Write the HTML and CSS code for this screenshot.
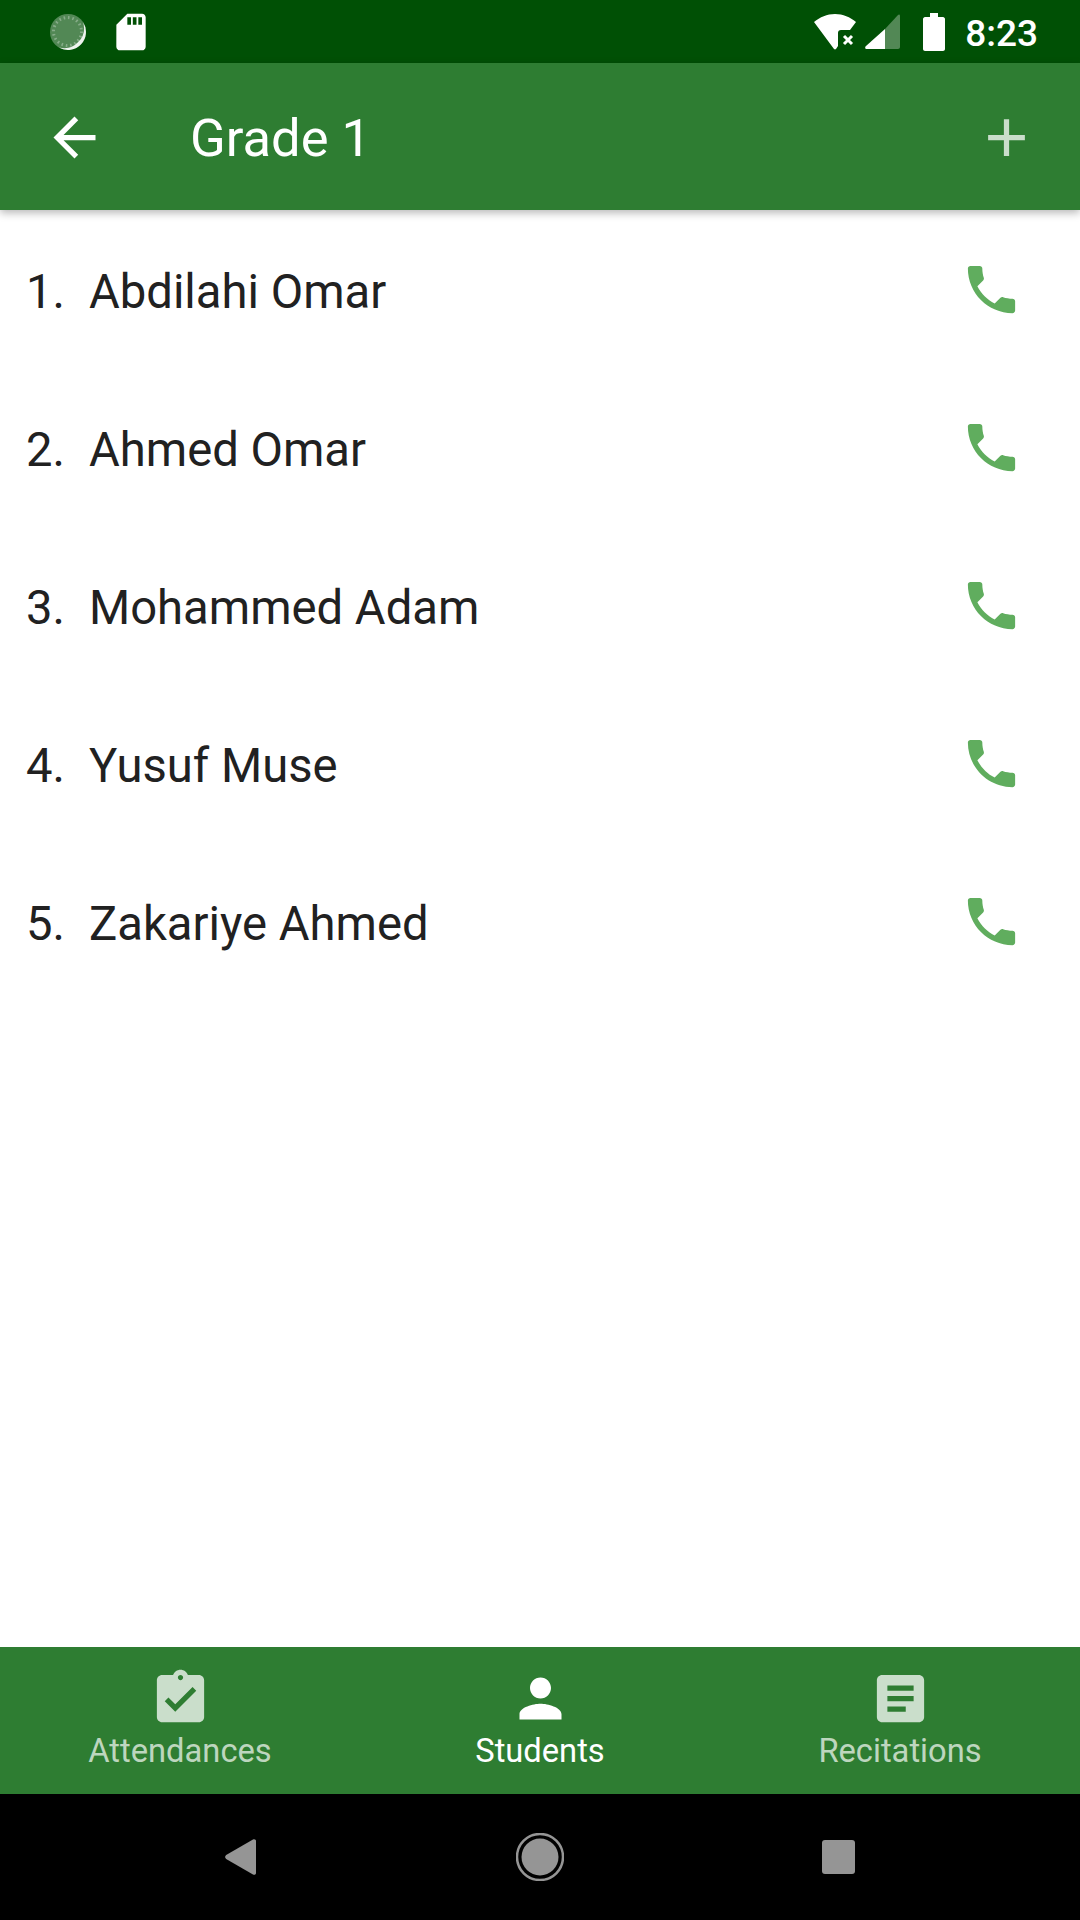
FILE: index.html
```html
<!DOCTYPE html>
<html lang="en">
<head>
  <meta charset="UTF-8">
  <title>Grade 1</title>
  <link rel="stylesheet" href="styles.css">
</head>
<body>
  <div class="status-bar">
    <div class="status-left">
      <svg class="icon-sync" viewBox="0 0 44 44">
        <circle cx="21" cy="22" r="18" fill="#fff" fill-opacity=".32"/>
        <circle cx="20.500" cy="21.500" r="14" fill="none" stroke="#fff" stroke-opacity=".3" stroke-width="3" stroke-dasharray="1.600 2.800"/>
        <path d="M36 12a18 18 0 0 1-24 25.500a20 20 0 0 0 24-25.500z" fill="#fff" fill-opacity=".9"/>
      </svg>
      <svg class="icon-sd" viewBox="0 0 24 24"><path fill="#fff" d="M18 2h-8L4.020 8 4 20c0 1.100.9 2 2 2h12c1.100 0 2-.9 2-2V4c0-1.100-.9-2-2-2zm-6 6h-2V4h2v4zm3 0h-2V4h2v4zm3 0h-2V4h2v4z"/></svg>
    </div>
    <div class="status-right">
      <svg class="icon-wifi" viewBox="0 0 44 36">
        <path fill="#fff" d="M1 8C7 3 14 0 22 0s15 3 21 8l-6 8H28a3 3 0 0 0-3 3v13l-2 3a1.500 1.500 0 0 1-2 0z"/>
        <path stroke="#fff" stroke-width="3" d="M31 22l8 8M39 22l-8 8"/>
      </svg>
      <svg class="icon-signal" viewBox="0 0 35 35">
        <path fill="#fff" fill-opacity=".32" d="M33 1c1-1 2-.5 2 1v31c0 1-1 2-2 2H20V15z"/>
        <path fill="#fff" d="M20 15v20H2c-2 0-2.500-1.500-1-3z"/>
      </svg>
      <svg class="icon-battery" viewBox="0 0 22 38"><path fill="#fff" d="M7 0h8v4h5c1 0 2 1 2 2v30c0 1-1 2-2 2H2c-1 0-2-1-2-2V6c0-1 1-2 2-2h5z"/></svg>
      <span class="clock">8:23</span>
    </div>
  </div>

  <header class="app-bar">
    <svg class="icon" viewBox="0 0 24 24"><path fill="#fff" d="M20 11H7.830l5.590-5.590L12 4l-8 8 8 8 1.410-1.410L7.830 13H20v-2z"/></svg>
    <h1 class="title">Grade 1</h1>
    <svg class="icon icon-add" viewBox="0 0 24 24"><path d="M19 13h-6v6h-2v-6H5v-2h6V5h2v6h6v2z"/></svg>
  </header>

  <main class="students">
    <div class="student">
      <span class="num">1.</span><span class="name">Abdilahi Omar</span>
      <svg class="icon icon-phone" viewBox="0 0 24 24"><use href="#phone"/></svg>
    </div>
    <div class="student">
      <span class="num">2.</span><span class="name">Ahmed Omar</span>
      <svg class="icon icon-phone" viewBox="0 0 24 24"><use href="#phone"/></svg>
    </div>
    <div class="student">
      <span class="num">3.</span><span class="name">Mohammed Adam</span>
      <svg class="icon icon-phone" viewBox="0 0 24 24"><use href="#phone"/></svg>
    </div>
    <div class="student">
      <span class="num">4.</span><span class="name">Yusuf Muse</span>
      <svg class="icon icon-phone" viewBox="0 0 24 24"><use href="#phone"/></svg>
    </div>
    <div class="student">
      <span class="num">5.</span><span class="name">Zakariye Ahmed</span>
      <svg class="icon icon-phone" viewBox="0 0 24 24"><use href="#phone"/></svg>
    </div>
  </main>

  <nav class="tabs">
    <div class="tab">
      <svg class="icon" viewBox="0 0 24 24"><path d="M19 3h-4.180C14.400 1.840 13.300 1 12 1c-1.300 0-2.400.84-2.820 2H5c-1.100 0-2 .9-2 2v14c0 1.100.9 2 2 2h14c1.100 0 2-.9 2-2V5c0-1.100-.9-2-2-2zm-7 0c.55 0 1 .45 1 1s-.45 1-1 1-1-.45-1-1 .45-1 1-1zm-2 14l-4-4 1.410-1.410L10 14.170l6.590-6.590L18 9l-8 8z"/></svg>
      <span>Attendances</span>
    </div>
    <div class="tab active">
      <svg class="icon" viewBox="0 0 24 24"><path d="M12 12c2.210 0 4-1.790 4-4s-1.790-4-4-4-4 1.790-4 4 1.790 4 4 4zm0 2c-2.670 0-8 1.340-8 4v2h16v-2c0-2.660-5.330-4-8-4z"/></svg>
      <span>Students</span>
    </div>
    <div class="tab">
      <svg class="icon" viewBox="0 0 24 24"><path d="M19 3H5c-1.100 0-2 .9-2 2v14c0 1.100.9 2 2 2h14c1.100 0 2-.9 2-2V5c0-1.100-.9-2-2-2zm-5 14H7v-2h7v2zm3-4H7v-2h10v2zm0-4H7V7h10v2z"/></svg>
      <span>Recitations</span>
    </div>
  </nav>

  <div class="system-nav">
    <svg class="sys-back" viewBox="0 0 31 36"><path fill="#959595" d="M2 15.500L28 .5c1.500-.8 3 0 3 1.500v32c0 1.500-1.500 2.300-3 1.500L2 20.500c-2.500-1.500-2.500-3.500 0-5z"/></svg>
    <svg class="sys-home" viewBox="0 0 48 48">
      <circle cx="24" cy="24" r="23" fill="none" stroke="#959595" stroke-width="2.500"/>
      <circle cx="24" cy="24" r="18.500" fill="#959595"/>
    </svg>
    <div class="sys-recent"></div>
  </div>

  <svg class="defs" width="0" height="0">
    <defs>
      <path id="phone" d="M6.620 10.790c1.440 2.830 3.760 5.140 6.590 6.590l2.200-2.200c.27-.27.67-.36 1.020-.24 1.120.37 2.330.57 3.570.57.55 0 1 .45 1 1V20c0 .55-.45 1-1 1-9.390 0-17-7.610-17-17 0-.55.45-1 1-1h3.500c.55 0 1 .45 1 1 0 1.250.2 2.450.57 3.570.11.35.03.74-.25 1.020l-2.200 2.200z"/>
    </defs>
  </svg>
</body>
</html>
```

FILE: styles.css
```css
body {
  font-family: Roboto, "Noto Sans", sans-serif;
  background-color: #ffffff;
  margin: 0;
  padding: 0;
  width: 1080px;
  height: 1920px;
  display: flex;
  flex-direction: column;
  overflow: hidden;
}

.icon {
  width: 63px;
  height: 63px;
  flex: none;
}

.defs {
  display: none;
}

/* status bar */
.status-bar {
  height: 63px;
  flex: none;
  background-color: #005005;
  color: white;
  display: flex;
  align-items: center;
  justify-content: space-between;
  padding: 0 42px 0 47px;
}
.status-left,
.status-right {
  display: flex;
  align-items: center;
}
.status-left {
  gap: 18px;
}
.icon-sync,
.icon-sd {
  width: 44px;
  height: 44px;
}
.icon-wifi {
  width: 44px;
  height: 36px;
}
.icon-signal {
  width: 35px;
  height: 35px;
  margin-left: 8px;
}
.icon-battery {
  width: 22px;
  height: 38px;
  margin-left: 23px;
}
.clock {
  font-size: 37px;
  font-weight: 500;
  margin: 4px 0 0 20px;
}

/* app bar */
.app-bar {
  height: 147px;
  flex: none;
  background-color: #2e7d32;
  color: white;
  display: flex;
  align-items: center;
  padding: 2px 42px 0 43px;
  box-sizing: border-box;
  box-shadow: 0 3px 8px rgba(0, 0, 0, 0.28);
  position: relative;
}
.title {
  flex: 1;
  font-size: 52.5px;
  font-weight: 400;
  margin: 0 0 0 84px;
}
.icon-add {
  fill: rgba(255, 255, 255, 0.75);
}

/* student list */
.students {
  flex: 1;
  padding-top: 2px;
}
.student {
  height: 158px;
  display: flex;
  align-items: center;
  padding: 0 57px 0 26px;
  font-size: 47.2px;
  color: #212121;
}
.num {
  width: 63px;
  margin-top: 1px;
}
.name {
  flex: 1;
  margin-top: 1px;
}
.icon-phone {
  fill: #60ad5e;
  margin-bottom: 4px;
}

/* bottom tabs */
.tabs {
  height: 147px;
  flex: none;
  background-color: #2e7d32;
  display: flex;
}
.tab {
  flex: 1;
  display: flex;
  flex-direction: column;
  align-items: center;
  padding-top: 20px;
  fill: rgba(255, 255, 255, 0.75);
  color: rgba(255, 255, 255, 0.7);
  font-size: 32.7px;
}
.tab span {
  margin-top: 2px;
}
.tab.active {
  fill: #ffffff;
  color: #ffffff;
}

/* android nav */
.system-nav {
  height: 126px;
  flex: none;
  background-color: #000000;
  display: flex;
  align-items: center;
  padding-left: 225px;
}
.sys-back {
  width: 31px;
  height: 36px;
}
.sys-home {
  width: 48px;
  height: 48px;
  margin-left: 260px;
}
.sys-recent {
  width: 33px;
  height: 34px;
  margin-left: 258px;
  background-color: #959595;
  border-radius: 3px;
}
```
